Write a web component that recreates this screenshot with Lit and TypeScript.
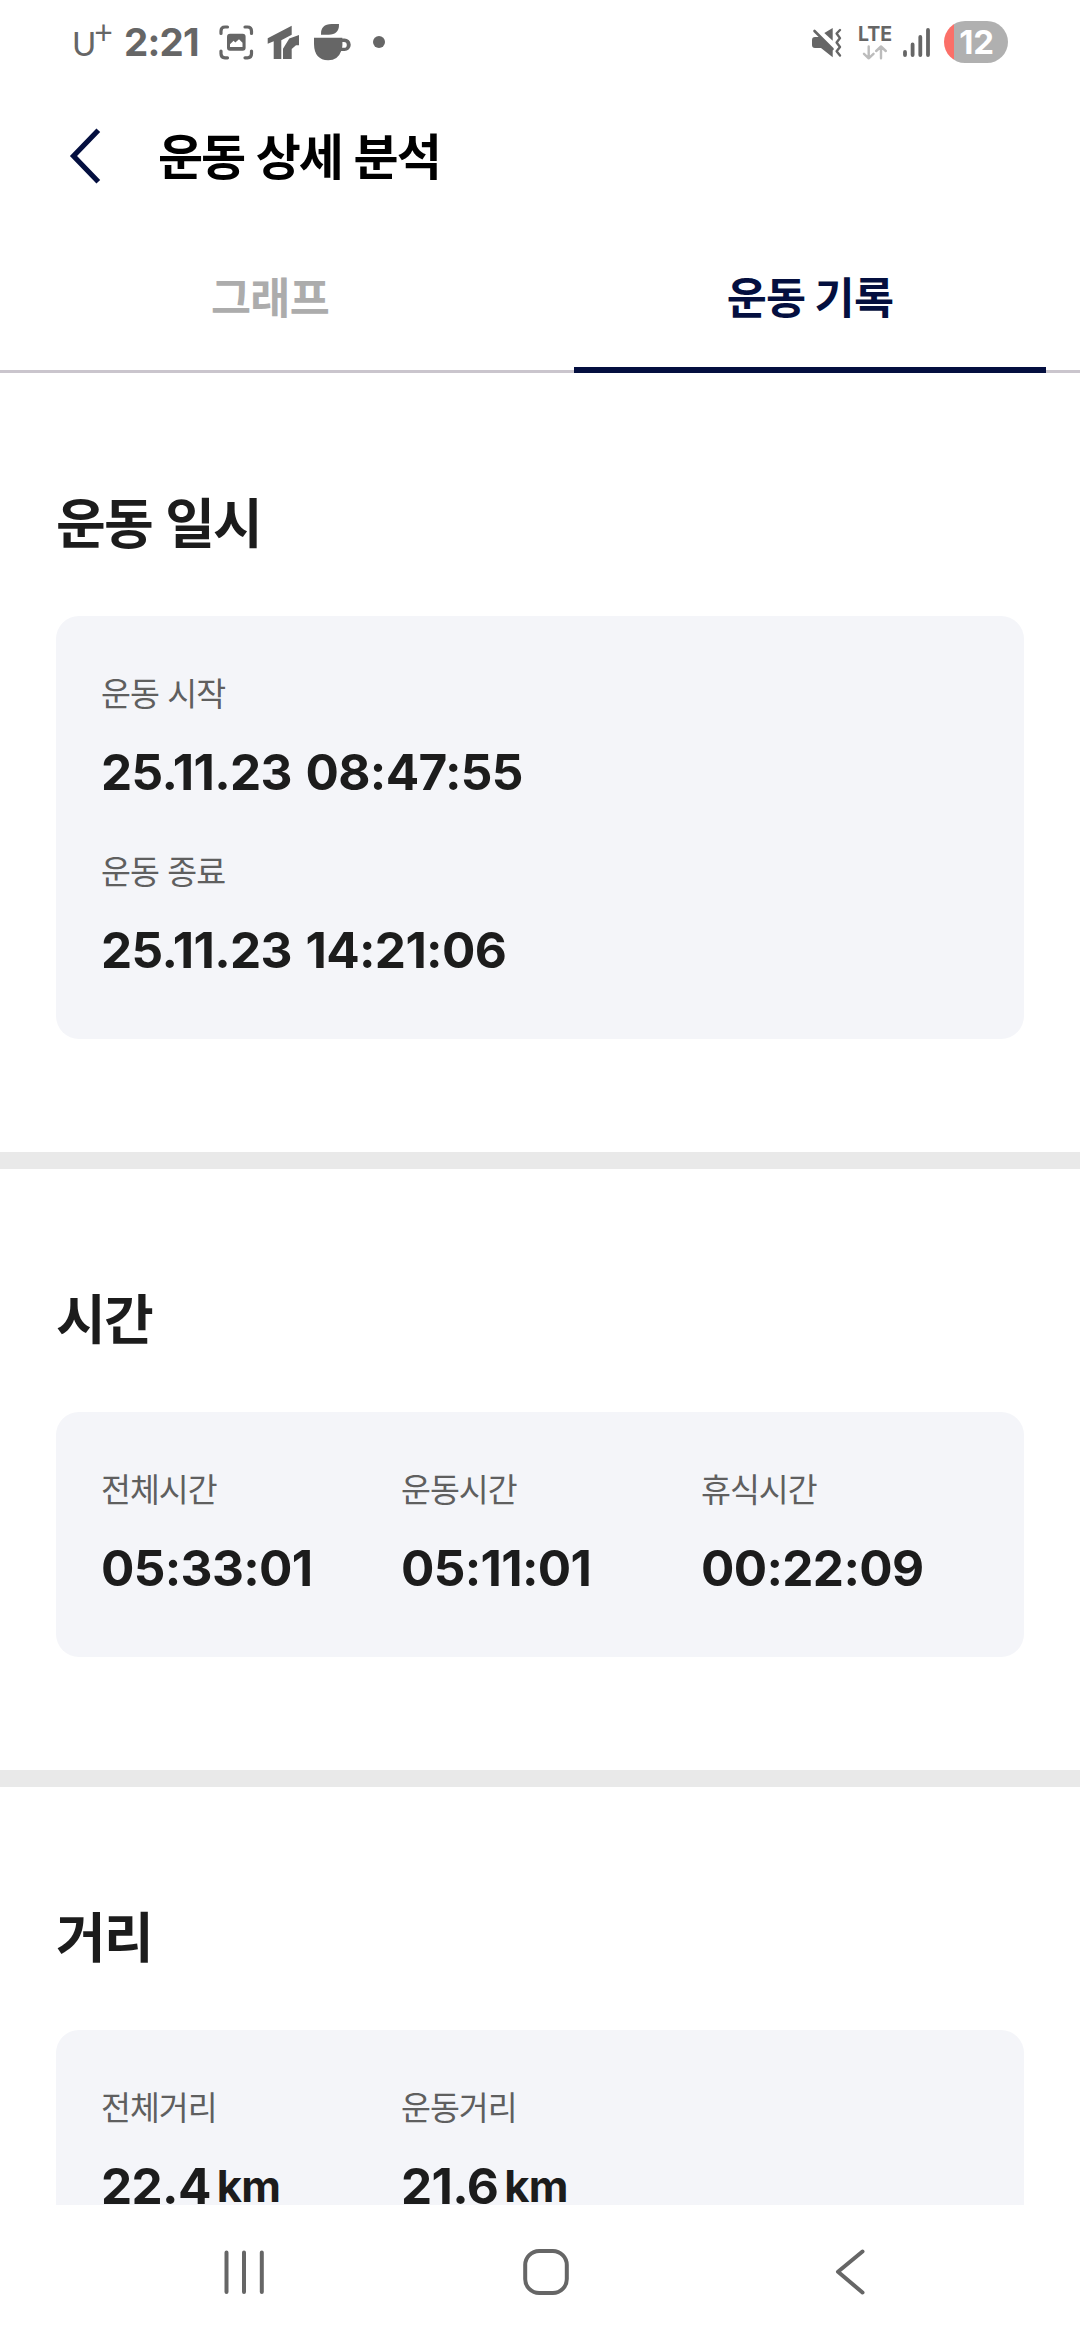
import { LitElement, html, css, nothing } from "lit";
import { customElement, property } from "lit/decorators.js";

interface Metric {
  label: string;
  value: string;
  unit?: string;
}

interface RecordSection {
  title: string;
  columns: number;
  metrics: Metric[];
}

const SECTIONS: RecordSection[] = [
  {
    title: "운동 일시",
    columns: 1,
    metrics: [
      { label: "운동 시작", value: "25.11.23 08:47:55" },
      { label: "운동 종료", value: "25.11.23 14:21:06" },
    ],
  },
  {
    title: "시간",
    columns: 3,
    metrics: [
      { label: "전체시간", value: "05:33:01" },
      { label: "운동시간", value: "05:11:01" },
      { label: "휴식시간", value: "00:22:09" },
    ],
  },
  {
    title: "거리",
    columns: 3,
    metrics: [
      { label: "전체거리", value: "22.4", unit: "km" },
      { label: "운동거리", value: "21.6", unit: "km" },
    ],
  },
];

@customElement("status-bar")
class StatusBar extends LitElement {
  static styles = css`
    :host {
      display: flex;
      justify-content: space-between;
      flex: none;
      height: 84px;
      color: #666;
      font-family: Inter, "Liberation Sans", sans-serif;
    }
    .side {
      display: flex;
      align-items: center;
    }
    .left {
      padding-left: 72px;
    }
    .right {
      padding-right: 72px;
    }
    .carrier {
      display: flex;
      width: 52px;
      font-family: Lato, sans-serif;
      font-weight: 400;
      font-size: 33px;
      line-height: 40px;
      padding-top: 1px;
    }
    .plus {
      font-size: 32px;
      font-weight: 400;
      line-height: 17px;
      margin-left: -2px;
    }
    .clock {
      width: 93px;
      font-weight: 700;
      font-size: 38.5px;
      line-height: 40px;
      letter-spacing: -0.8px;
    }
    .icons {
      display: block;
      flex: none;
    }
    .network {
      display: flex;
      flex-direction: column;
      align-items: center;
      width: 36px;
      margin-left: 14px;
    }
    .lte {
      font-weight: 700;
      font-size: 19.5px;
      line-height: 20px;
      height: 21px;
    }
    .bars {
      margin-left: 10px;
    }
    .battery {
      display: flex;
      align-items: center;
      justify-content: center;
      box-sizing: border-box;
      width: 64px;
      height: 42px;
      margin-left: 13px;
      padding-left: 1px;
      border-radius: 21px;
      background: linear-gradient(to right, #fb6f68 10px, #b0b0b0 10px);
      color: #fff;
      font-weight: 700;
      font-size: 33px;
      line-height: 42px;
      letter-spacing: -0.3px;
    }
  `;

  render() {
    return html`
      <div class="side left">
        <div class="carrier">U<span class="plus">+</span></div>
        <div class="clock">2:21</div>
        <svg class="icons" width="170" height="84" viewBox="217 0 170 84">
          <g fill="none" stroke="#666" stroke-width="3.2" stroke-linecap="round">
            <path d="M221 33.5V31q0-4 4-4h2.500M245 27h2.500q4 0 4 4v2.500M251.500 51v2.800q0 4-4 4H245M227.500 57.800H225q-4 0-4-4V51" />
          </g>
          <rect x="227" y="33.700" width="18.600" height="17" rx="3" fill="#666" />
          <path d="M230 47v-2.800l3.600-3.400 1.700 1.700 3.700-3.300 3.500 3.600V47z" fill="#fff" />
          <path d="M267.700 38.300 291.700 25.700V34.700L281.300 40.300V59H273.700V41.300L267.700 43.700z" fill="#666" />
          <path d="M283 59V48.700L289.300 38.600 299 35V45.300H296L291.700 49V59z" fill="#666" />
          <path d="M321 34.700q-.5-10.700 10.700-10.700H339q.3 10.700-10.500 10.700z" fill="#666" />
          <path d="M314 37.700H342.300V38.500H344.500a5.500 5.500 0 0 1 0 12.500H341.200Q338 60.300 328.200 60.300 314.300 60 314 44z" fill="#666" />
          <path d="M342.400 42h1.500a2.600 2.600 0 0 1 0 5.800h-1.800q.5-3 .3-5.800z" fill="#fff" />
          <circle cx="379" cy="42" r="6" fill="#666" />
        </svg>
      </div>
      <div class="side right">
        <svg class="icons" width="32" height="84" viewBox="810 0 32 84">
          <path d="M811 40q0-3 3-3h5.500L831.700 49V57.300L820 48H814q-3 0-3-3z" fill="#666" />
          <path d="M823.300 33 831.700 28V40.800z" fill="#666" />
          <path d="M813.500 31 831.500 49" fill="none" stroke="#666" stroke-width="2.600" stroke-linecap="round" />
          <path d="M839 30l-3.400 3.500 3.400 4.600-3.400 4.400 3.400 4.500-3.400 4.300 3.400 4.200" fill="none" stroke="#666" stroke-width="2.400" stroke-linecap="round" stroke-linejoin="round" />
        </svg>
        <div class="network">
          <div class="lte">LTE</div>
          <svg width="26" height="15" viewBox="0 0 26 15" fill="none" stroke="#bcbcbc" stroke-width="2.400" stroke-linecap="round" stroke-linejoin="round">
            <path d="M6.700 1.500V13.300M2 8.800l4.700 4.500L11.500 8.800M19 13.300V1.500M14.200 6 19 1.500 23.800 6" />
          </svg>
        </div>
        <svg class="icons bars" width="28" height="84" viewBox="903 0 28 84" stroke="#666" stroke-width="3.800" stroke-linecap="round">
          <path d="M905 52V55M912.600 44.500V55M920.300 37V55M928 30V55" />
        </svg>
        <div class="battery">12</div>
      </div>
    `;
  }
}

@customElement("metric-item")
class MetricItem extends LitElement {
  @property({ attribute: false }) metric!: Metric;

  static styles = css`
    :host {
      display: flex;
      flex-direction: column;
      gap: 25px;
    }
    .label {
      color: #5f5f5f;
      font-size: 32.5px;
      line-height: 44px;
      letter-spacing: -1px;
      word-spacing: 2.2px;
      white-space: nowrap;
    }
    .value {
      display: flex;
      align-items: baseline;
      font-family: Inter, "Noto Sans CJK KR", sans-serif;
      font-weight: 700;
      font-size: 49.5px;
      line-height: 66px;
      letter-spacing: -0.65px;
      word-spacing: 2.5px;
      color: #1c1c1c;
      white-space: nowrap;
    }
    .unit {
      margin-left: 6px;
      font-size: 43.5px;
      line-height: 62px;
      transform: translateY(-2px);
    }
  `;

  render() {
    const { label, value, unit } = this.metric;
    return html`
      <div class="label">${label}</div>
      <div class="value">${value}${unit ? html`<span class="unit">${unit}</span>` : nothing}</div>
    `;
  }
}

@customElement("record-section")
class RecordSectionElement extends LitElement {
  @property({ attribute: false }) section!: RecordSection;

  static styles = css`
    :host {
      display: block;
      padding: 114px 56px 113px;
    }
    .title {
      margin: 0 0 61px;
      font-size: 54px;
      line-height: 68px;
      font-weight: 700;
      letter-spacing: -1.8px;
      word-spacing: 3px;
      color: #1c1c1c;
    }
    .card {
      display: grid;
      padding: 54px 45px 56px;
      border-radius: 23px;
      background: #f4f5f9;
    }
    .rows {
      row-gap: 43px;
    }
    .thirds {
      grid-template-columns: repeat(3, 1fr);
      column-gap: 22px;
    }
  `;

  render() {
    const { title, columns, metrics } = this.section;
    return html`
      <h2 class="title">${title}</h2>
      <div class="card ${columns === 3 ? "thirds" : "rows"}">
        ${metrics.map((m) => html`<metric-item .metric=${m}></metric-item>`)}
      </div>
    `;
  }
}

@customElement("app-root")
class AppRoot extends LitElement {
  static styles = css`
    :host {
      display: flex;
      flex-direction: column;
      width: 1080px;
      height: 2340px;
      overflow: hidden;
      background: #fff;
      font-family: "Noto Sans CJK KR", sans-serif;
    }
    .header {
      display: flex;
      align-items: center;
      flex: none;
      height: 144px;
      padding-left: 68px;
    }
    .back {
      display: block;
      width: 91px;
    }
    .heading {
      margin: 0 0 5px -1px;
      font-size: 49px;
      line-height: 72px;
      font-weight: 700;
      letter-spacing: -2px;
      word-spacing: 2.5px;
      color: #000;
    }
    .tabs {
      display: flex;
      flex: none;
      height: 145px;
      box-sizing: border-box;
      background: linear-gradient(#cac5cd, #cac5cd) bottom / 100% 3px no-repeat;
    }
    .tab {
      display: flex;
      flex-direction: column;
      align-items: center;
      flex: 1;
      font-size: 43.5px;
      line-height: 135px;
      font-weight: 700;
      letter-spacing: -0.7px;
      color: #acacac;
    }
    .active {
      color: #040f3f;
    }
    .indicator {
      width: 472px;
      height: 6px;
      margin-top: 4px;
      background: #040f3f;
    }
    .content {
      flex: 1;
      min-height: 0;
      overflow: hidden;
    }
    .divider {
      height: 17px;
      background: #e9e9e9;
    }
    .nav {
      display: flex;
      align-items: center;
      box-sizing: border-box;
      flex: none;
      height: 135px;
      padding-left: 222px;
      padding-bottom: 1px;
      fill: none;
      stroke: #666;
      stroke-width: 4;
      stroke-linecap: round;
      stroke-linejoin: round;
    }
    .home {
      margin-left: 255px;
    }
    .previous {
      margin-left: 262px;
    }
  `;

  render() {
    return html`
      <status-bar></status-bar>
      <header class="header">
        <svg class="back" width="91" height="60" viewBox="0 0 91 60" fill="none" stroke="#040f3f" stroke-width="5.200">
          <path d="M30.300 4.200 5.500 30 30.300 55.800" />
        </svg>
        <h1 class="heading">운동 상세 분석</h1>
      </header>
      <nav class="tabs">
        <div class="tab">그래프</div>
        <div class="tab active">
          운동 기록
          <div class="indicator"></div>
        </div>
      </nav>
      <main class="content">
        ${SECTIONS.map(
          (s, i) => html`
            ${i > 0 ? html`<div class="divider"></div>` : nothing}
            <record-section .section=${s}></record-section>
          `,
        )}
      </main>
      <footer class="nav">
        <svg width="44" height="50" viewBox="222 2247 44 50">
          <path d="M226.500 2252.500V2292M244 2252.500V2292M261.800 2252.500V2292" />
        </svg>
        <svg class="home" width="50" height="50" viewBox="521 2247 50 50">
          <rect x="525.200" y="2251" width="41.600" height="42" rx="14" />
        </svg>
        <svg class="previous" width="34" height="50" viewBox="832 2247 34 50">
          <path d="M861.500 2251.500 837 2271.800 861.500 2292.500" />
        </svg>
      </footer>
    `;
  }
}
